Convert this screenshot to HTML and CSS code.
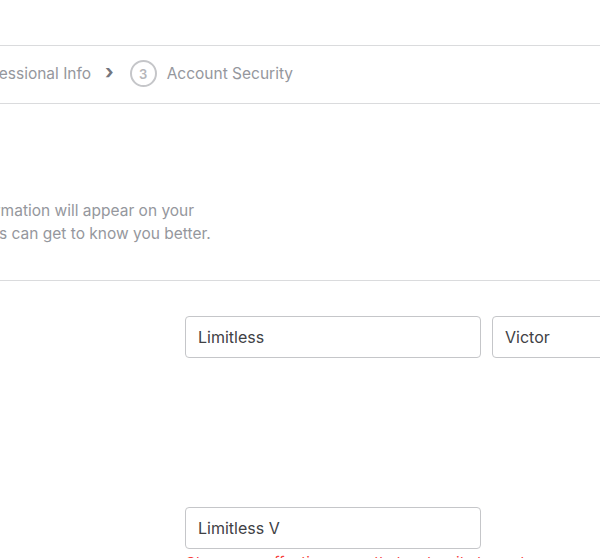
FILE: index.html
```html
<!DOCTYPE html>
<html lang="en">
<head>
  <meta charset="UTF-8">
  <title>Seller Onboarding - Personal Info</title>
  <link rel="stylesheet" href="styles.css">
</head>
<body>
  <div class="topbar"></div>

  <div class="steps">
    <div class="steps-inner">
      <span class="step"><span class="step-num">1</span>Personal Info</span>
      <span class="chevron">&#8250;</span>
      <span class="step"><span class="step-num">2</span>Professional Info</span>
      <span class="chevron">&#8250;</span>
      <span class="step"><span class="step-num">3</span>Account Security</span>
    </div>
  </div>

  <div class="intro">
    <div class="intro-inner">
      <h2>Personal Info</h2>
      <p>Tell us a bit about yourself. This information will appear on your<br>
      public profile, so that potential buyers can get to know you better.</p>
    </div>
  </div>

  <form class="form">
    <div class="row">
      <label class="label">Full Name*</label>
      <div class="fields">
        <input type="text" class="input" value="Limitless">
        <input type="text" class="input" value="Victor">
      </div>
    </div>

    <div class="row row-display">
      <label class="label">Display Name*</label>
      <div class="fields">
        <input type="text" class="input" value="Limitless V">
      </div>
      <p class="error">Choose an effective name that makes it clear who you are and what you do.</p>
    </div>
  </form>
</body>
</html>
```

FILE: styles.css
```css
body {
  margin: 0;
  font-family: Inter, "Liberation Sans", sans-serif;
  color: #404145;
  background: #fff;
  overflow: hidden;
  height: 558px;
}
.topbar {
  height: 45px;
  border-bottom: 1px solid #dadbdd;
}
.steps {
  height: 57px;
  border-bottom: 1px solid #dadbdd;
  overflow: hidden;
}
.steps-inner {
  display: flex;
  align-items: center;
  height: 100%;
  margin-top: -1px;
  margin-left: -240px;
  white-space: nowrap;
  font-size: 15.5px;
  color: #95979d;
}
.step {
  display: flex;
  align-items: center;
}
.step-num {
  width: 23px;
  height: 23px;
  border: 2px solid #c5c6c9;
  border-radius: 50%;
  display: flex;
  align-items: center;
  justify-content: center;
  font-size: 13px;
  font-weight: 600;
  color: #b5b6ba;
  margin-right: 10px;
}
.chevron {
  font-size: 20px;
  font-weight: 700;
  margin: -3px 16px 0 14px;
  color: #74767e;
}
.intro {
  height: 176px;
  border-bottom: 1px solid #dadbdd;
  overflow: hidden;
}
.intro-inner {
  margin-left: -269px;
  padding-top: 38px;
  white-space: nowrap;
}
.intro h2 {
  margin: 0 0 18px;
  font-size: 32px;
  font-weight: 700;
  color: #404145;
}
.intro p {
  margin: 0;
  font-size: 15.5px;
  line-height: 23px;
  color: #95979d;
}
.form {
  padding-top: 35px;
}
.row {
  display: flex;
  flex-wrap: wrap;
  padding-left: 185px;
}
.label {
  display: none;
}
.fields {
  display: flex;
  gap: 11px;
}
.input {
  width: 296px;
  height: 42px;
  box-sizing: border-box;
  padding: 0 12px;
  border: 1px solid #c5c6c9;
  border-radius: 4px;
  font-family: Inter, "Liberation Sans", sans-serif;
  font-size: 16px;
  line-height: 20px;
  color: #404145;
  flex-shrink: 0;
}
.row-display {
  margin-top: 149px;
}
.error {
  width: 100%;
  margin: 4px 0 0;
  font-size: 15px;
  color: #f74040;
  white-space: nowrap;
}
```
